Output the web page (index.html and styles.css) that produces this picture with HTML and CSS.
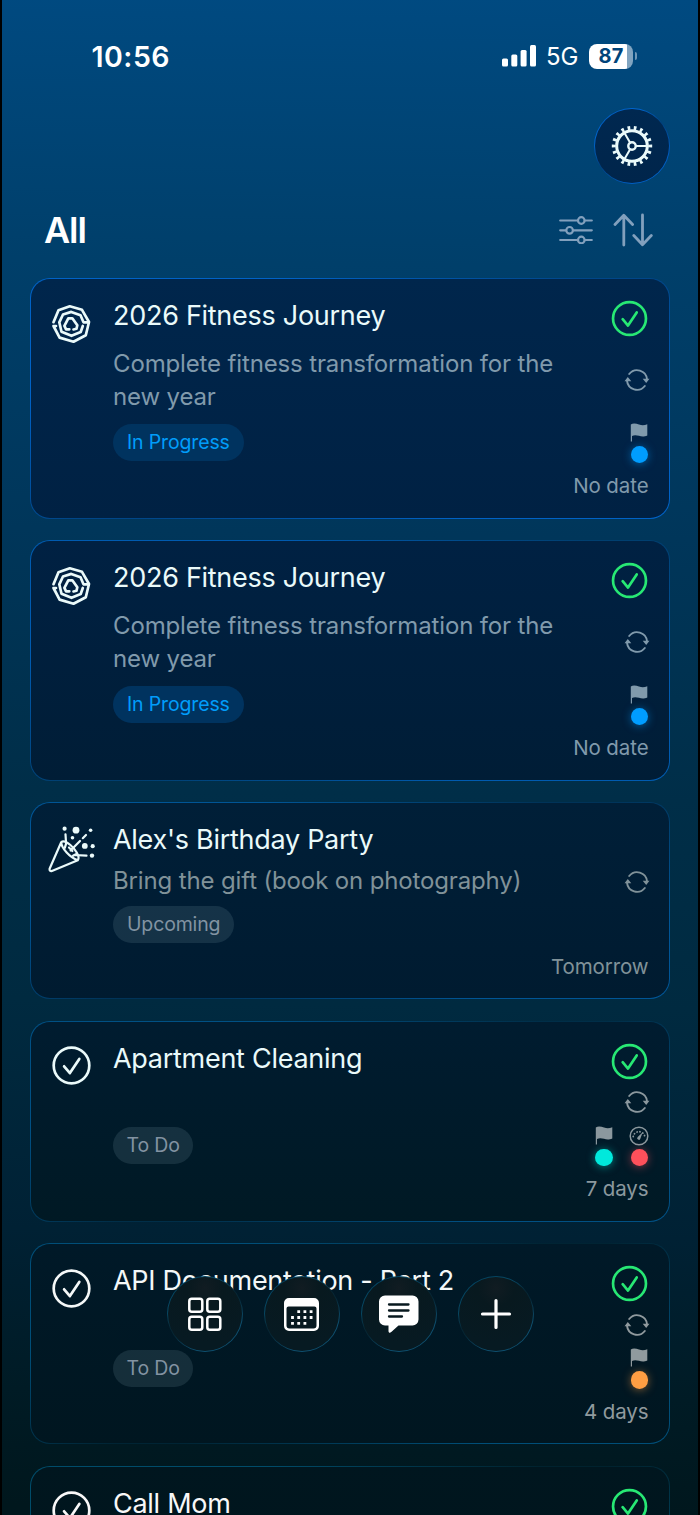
FILE: index.html
```html
<!DOCTYPE html>
<html lang="en">
<head>
<meta charset="utf-8">
<title>All tasks</title>
<link rel="stylesheet" href="styles.css">
</head>
<body>
<svg width="0" height="0" class="defs">
  <defs>
    <symbol id="check" viewBox="0 0 40 40"><circle cx="20" cy="20" r="17.8"/><path d="M12.6 20.8l5.8 6.8L27.8 13.4"/></symbol>
    <symbol id="sync" viewBox="0 0 26 24"><path d="M5.2 6A10 10 0 0 1 23 11.3M20.8 18A10 10 0 0 1 3 12.7"/><path class="solid" d="M18.7 10.800h6.800l-3.300 4.200zM.5 13.200h6.800L3.800 9z"/></symbol>
    <symbol id="flag" viewBox="0 0 18 19"><path d="M.8 1.6C3-.2 6 .4 9 1.6c3 1 5.500.8 8.300-.3V12.400C14 14 11.500 13.600 9 12.800 6.300 12 4 11.900 2 12.900V18.500H.8z"/></symbol>
    <symbol id="gauge" viewBox="0 0 20 20"><circle cx="10" cy="10" r="8.800"/><path class="ticks" d="M4.200 10.500a5.900 5.900 0 0 1 11.600 0"/><path class="solid" d="M13.700 6.200l-2.300 6.400a1.600 1.600 0 1 1-2.700-1.500z"/></symbol>
    <symbol id="spiral" viewBox="0 0 40 40"><path d="M2.500 18.200L7.500 6.300 18.800 2.300 31 5.800 38 18l-3.200 13.200L22.500 37.700 8.600 33.600 2.500 22H5"/><path d="M37 18.300h-4.500L29.500 11.300 20.300 7.900 12 10.500 8.300 18.300 10.500 27.700 20.500 31.800 29.700 28 31.800 22"/><path d="M18.300 25.300h-3.200L13.400 21.800 17.300 14.300h4L26.300 21.300 25.500 24.800 22.500 25.500"/></symbol>
    <symbol id="party" viewBox="0 0 48 48"><path d="M13.200 16.300L1.600 42.800c-.4 1.700.8 2.600 2.300 2.100L29.800 34.200c3-3.600-3.400-11.800-7.400-15.200-3.600-3-7.300-4.700-9.200-2.700zM13.200 16.300c.2 6 8.800 15.400 16.600 17.900"/><path d="M17.500 8.300l.6 9.400-1.300 4.200M22.600 24.500L32 15M34.800 12.200L38 9M26 29l12.500.7M21 21.500l3.400 3.500M25 29.800l3.500-1.900"/><g class="solid"><circle cx="16.600" cy="2.700" r="2.100"/><circle cx="28" cy="4.200" r="3.400"/><circle cx="42.600" cy="4.200" r="1.800"/><circle cx="24.500" cy="11.700" r="1.800"/><circle cx="36.800" cy="19.900" r="2.900"/><circle cx="44.700" cy="20.200" r="2.100"/><circle cx="44" cy="29.600" r="2.200"/></g></symbol>
  </defs>
</svg>
<div class="phone">
  <header class="status">
    <span class="time">10:56</span>
    <div class="signals">
      <svg class="bars" viewBox="0 0 34 22"><rect x="0" y="13.500" width="6" height="8" rx="1.500"/><rect x="9.300" y="9.500" width="6" height="12" rx="1.500"/><rect x="18.600" y="5" width="6" height="16.500" rx="1.500"/><rect x="28" y="0" width="6" height="21.500" rx="1.500"/></svg>
      <span class="network">5G</span>
      <span class="battery">87</span><i class="battery-tip"></i>
    </div>
  </header>
  <div class="settings-row">
    <div class="round">
      <svg class="gear" viewBox="0 0 42 42"><circle cx="21" cy="21" r="15.300" stroke-width="3"/><circle class="teeth" cx="21" cy="21" r="18.200" stroke-width="4" pathLength="36"/><circle cx="21" cy="21" r="3.700" stroke-width="2.400"/><path stroke-width="2" d="M25 21h10M19 17.600L13.500 8M19 24.400L13.500 34"/></svg>
    </div>
  </div>
  <div class="heading">
    <h1>All</h1>
    <svg class="filter" viewBox="0 0 34 28"><path d="M1.200 4.500h17.500M25.800 4.500h7M1.200 14.300H7M14.200 14.300h18.600M1.200 24h17.500M25.800 24h7"/><circle cx="22.300" cy="4.500" r="3.300"/><circle cx="10.600" cy="14.300" r="3.300"/><circle cx="22.300" cy="24" r="3.300"/></svg>
    <svg class="sort" viewBox="0 0 40 34"><path d="M10.800 32V2.500M2 11.500L10.800 2.300l8.800 9.200M29.500 2v29.500M20.800 22.500l8.700 9.200 8.800-9.200"/></svg>
  </div>
  <main class="list">
    <article class="card tall c1">
      <svg class="icon"><use href="#spiral"/></svg>
      <div class="body"><h2>2026 Fitness Journey</h2><p>Complete fitness transformation for the<br>new year</p><span class="badge blue">In Progress</span></div>
      <div class="side"><svg class="done"><use href="#check"/></svg><svg class="sync"><use href="#sync"/></svg><div class="marks"><div class="mark sky"><svg class="flag"><use href="#flag"/></svg><i></i></div></div><time>No date</time></div>
    </article>
    <article class="card tall c2">
      <svg class="icon"><use href="#spiral"/></svg>
      <div class="body"><h2>2026 Fitness Journey</h2><p>Complete fitness transformation for the<br>new year</p><span class="badge blue">In Progress</span></div>
      <div class="side"><svg class="done"><use href="#check"/></svg><svg class="sync"><use href="#sync"/></svg><div class="marks"><div class="mark sky"><svg class="flag"><use href="#flag"/></svg><i></i></div></div><time>No date</time></div>
    </article>
    <article class="card party c3">
      <svg class="icon"><use href="#party"/></svg>
      <div class="body"><h2>Alex's Birthday Party</h2><p>Bring the gift (book on photography)</p><span class="badge">Upcoming</span></div>
      <div class="side"><svg class="sync"><use href="#sync"/></svg><time>Tomorrow</time></div>
    </article>
    <article class="card short c4">
      <svg class="icon"><use href="#check"/></svg>
      <div class="body"><h2>Apartment Cleaning</h2><span class="badge">To Do</span></div>
      <div class="side"><svg class="done"><use href="#check"/></svg><svg class="sync"><use href="#sync"/></svg><div class="marks"><div class="mark teal"><svg class="flag"><use href="#flag"/></svg><i></i></div><div class="mark red"><svg class="gauge"><use href="#gauge"/></svg><i></i></div></div><time>7 days</time></div>
    </article>
    <article class="card short c5">
      <svg class="icon"><use href="#check"/></svg>
      <div class="body"><h2>API Documentation - Part 2</h2><span class="badge">To Do</span></div>
      <div class="side"><svg class="done"><use href="#check"/></svg><svg class="sync"><use href="#sync"/></svg><div class="marks"><div class="mark orange"><svg class="flag"><use href="#flag"/></svg><i></i></div></div><time>4 days</time></div>
    </article>
    <article class="card short c6">
      <svg class="icon"><use href="#check"/></svg>
      <div class="body"><h2>Call Mom</h2></div>
      <div class="side"><svg class="done"><use href="#check"/></svg></div>
    </article>
  </main>
  <nav class="dock">
    <div class="round"><svg viewBox="0 0 40 40"><g class="grid"><rect x="4.300" y="4.800" width="13" height="13" rx="2.500"/><rect x="22.300" y="4.800" width="13" height="13" rx="2.500"/><rect x="4.300" y="22.800" width="13" height="13" rx="2.500"/><rect x="22.300" y="22.800" width="13" height="13" rx="2.500"/></g></svg></div>
    <div class="round"><svg viewBox="0 0 40 40"><path fill="#fff" fill-rule="evenodd" d="M7 4h25a5 5 0 0 1 5 5v23a5 5 0 0 1-5 5H7a5 5 0 0 1-5-5V9a5 5 0 0 1 5-5zM6.500 12.500a2 2 0 0 0-2 2V31.500a3 3 0 0 0 3 3h24a3 3 0 0 0 3-3V14.500a2 2 0 0 0-2-2z"/><path class="days" d="M15.300 17.700h15.500M9.100 23.500h21.500M9.100 29.300h15.500"/></svg></div>
    <div class="round"><svg viewBox="0 0 40 40"><path fill="#fff" d="M6 1.500h27.500a6 6 0 0 1 6 6v18a6 6 0 0 1-6 6H19.500l-7.500 6.800c-1.300 1-2.500.4-2.500-1.300v-5.500H6a6 6 0 0 1-6-6v-18a6 6 0 0 1 6-6z"/><path class="lines" d="M10 10.500h19.500M10 16.500h19.500M10 22.500h13"/></svg></div>
    <div class="round"><svg viewBox="0 0 40 40"><path class="plus" d="M20 6.500v27M6.500 20h27"/></svg></div>
  </nav>
</div>
</body>
</html>
```
FILE: styles.css
```css
* { box-sizing: border-box; }
html, body { height: 1515px; overflow: hidden; }
body { margin: 0; background: #000; font-family: Inter, "Liberation Sans", sans-serif; color: #fff; }
svg { display: block; fill: none; stroke-linecap: round; stroke-linejoin: round; flex: none; }
.defs { position: absolute; }
h1, h2, p { margin: 0; font-weight: 400; }

.phone {
  position: relative;
  width: 696px;
  height: 1515px;
  margin: 0 auto;
  overflow: hidden;
  background: linear-gradient(181deg, #004a81 0, #003f6a 270px, #00365a 540px, #002e48 800px, #002a40 1010px, #002134 1240px, #001b25 1400px, #00171d 1515px);
}

/* status bar */
.status { display: flex; justify-content: space-between; align-items: center; height: 60px; margin-top: 26px; padding: 0 61px 0 89.500px; }
.time { font-size: 28.500px; font-weight: 600; letter-spacing: .5px; }
.signals { display: flex; align-items: center; }
.bars { width: 34px; height: 22px; fill: #fff; }
.network { margin-left: 10.500px; font-size: 24px; width: 43px; letter-spacing: -.1px; }
.battery { width: 44px; height: 25px; border-radius: 8px; background: linear-gradient(90deg, #fff 38px, #80a4c0 38px); color: #00447a; font-size: 20px; font-weight: 700; line-height: 25px; text-align: center; letter-spacing: .2px; }
.battery-tip { width: 2.5px; height: 8px; margin-left: 1.5px; border-radius: 0 3px 3px 0; background: #6f98b8; }

.round { display: grid; place-items: center; width: 76px; height: 76px; border: 1.5px solid transparent; border-radius: 50%; }
.settings-row { display: flex; justify-content: flex-end; height: 88px; padding: 21.500px 28px 0 0; }
.settings-row .round { flex: none; background: linear-gradient(#002850, #00254b) padding-box, linear-gradient(145deg, #005cc0 10%, #0068d4 25%, #00407f 48%, #005cc0 75%, #0068d4) border-box; }
.gear { width: 42px; height: 42px; stroke: #eafafa; }
.gear .teeth { stroke-dasharray: .85 1.15; stroke-dashoffset: .42; stroke-linecap: butt; }

.heading { display: flex; align-items: center; height: 40px; margin-top: 36px; padding: 0 45px 0 42px; }
h1 { flex: 1; font-size: 36px; font-weight: 600; line-height: 40px; letter-spacing: -1.100px; }
.filter { width: 34px; height: 28px; stroke: #82a0bd; stroke-width: 2.200; }
.sort { width: 40px; height: 34px; margin-left: 20px; stroke: #82a0bd; stroke-width: 2.800; }

/* cards */
.list { display: flex; flex-direction: column; gap: 21.5px; padding: 28px 28px 0; }
.card {
  --edge: #0053a3; --dim: #003a6c; --fill: #002448; --fill2: #002143; --ink: #eafafa; --muted: #809aac;
  display: grid; grid-template-columns: 82px minmax(0, 1fr) 120px; flex: none;
  width: 640px; border: 1px solid transparent; border-radius: 20px; color: var(--ink);
  background: linear-gradient(var(--fill), var(--fill2)) padding-box, linear-gradient(155deg, var(--edge) 0, var(--edge) 22%, var(--dim) 48%, var(--dim) 54%, var(--edge) 82%) border-box;
}
.tall { height: 240.500px; }
.party { height: 197px; }
.short { height: 201px; }
.c1 { --edge: #0062c6; --dim: #004688; --fill: #00264c; --fill2: #002143; }
.c2 { --edge: #005bb0; --dim: #003f70; --fill: #002143; --fill2: #001d36; }
.c3 { --edge: #005596; --dim: #003358; --fill: #001f38; --fill2: #001b30; --muted: #809299; }
.c4 { --edge: #005084; --dim: #002e48; --fill: #001c30; --fill2: #001924; --muted: #8b989e; }
.c5 { --edge: #004e78; --dim: #002434; --fill: #001928; --fill2: #001620; --ink: #f4f8f8; --muted: #909a9e; }
.c6 { --edge: #004c6a; --dim: #00222e; --fill: #00161f; --fill2: #001419; --ink: #f8f8f8; }
.icon { width: 40px; height: 40px; margin: 23.500px 0 0 20px; stroke: var(--ink); stroke-width: 2.700; }
.short .icon { width: 41px; height: 41px; margin-left: 19.500px; padding: .5px; }
.tall .icon { margin-top: 25px; }
.party .icon { width: 48px; height: 48px; margin: 23px 0 0 17px; stroke-width: 2.200; }
.solid { fill: currentColor; stroke: none; }
h2 { margin-top: 20px; font-size: 27px; line-height: 34px; white-space: nowrap; letter-spacing: -.28px; }
p { color: var(--muted); font-size: 24px; line-height: 33px; white-space: nowrap; letter-spacing: -.14px; }
.tall p { margin-top: 13.500px; }
.party p { margin-top: 7px; }
.badge { display: block; width: max-content; height: 37px; padding: 0 14px; border-radius: 19px; background: rgba(128,170,180,.16); color: #8293a2; font-size: 19.500px; line-height: 36.500px; letter-spacing: -.15px; }
.tall .badge { margin-top: 11px; }
.party .badge { margin-top: 9px; }
.short .badge { margin-top: 51.500px; padding: 0 13.500px; }
.blue { background: #00335f; color: #009dfa; }

.side { display: flex; flex-direction: column; align-items: flex-end; padding: 21px 20.500px 19.500px 0; color: var(--muted); }
.done { width: 37px; height: 37px; margin-right: 1px; stroke: #27e874; stroke-width: 2.900; }
.sync { width: 26px; height: 24px; margin-right: -1px; stroke: var(--muted); stroke-width: 1.900; }
.tall .sync { margin-top: 30.500px; }
.party .sync { margin-top: 45.500px; }
.short .sync { margin-top: 10.500px; }
.marks { display: flex; gap: 17px; margin-top: auto; margin-bottom: 11px; }
.mark { display: flex; flex-direction: column; align-items: center; gap: 4px; width: 18.500px; }
.flag { width: 18px; height: 19px; fill: currentColor; }
.gauge { width: 20px; height: 20px; margin-bottom: -1px; stroke: currentColor; stroke-width: 1.500; }
.ticks { stroke-dasharray: .1 2.900; stroke-width: 1.800; }
.mark i { width: 17.500px; height: 17.500px; border-radius: 50%; background: var(--dot); box-shadow: 0 1px 9px color-mix(in srgb, var(--dot) 50%, transparent); }
.sky { --dot: #009dff; }
.teal { --dot: #00e9dc; }
.red { --dot: #ff505b; }
.orange { --dot: #ff9e43; }
time { font-size: 20.500px; line-height: 24px; letter-spacing: -.1px; }
.party time { margin-top: auto; }

.dock { position: absolute; left: 164.500px; top: 1275.500px; display: flex; gap: 21px; }
.dock .round { background: radial-gradient(circle at 50% 15%, #111c22, #08191f 25%, #071a22 75%) padding-box, linear-gradient(150deg, #003f5c, #084a66 30%, #062634 45%, #062634 52%, #0e5070 75%) border-box; }
.dock svg { width: 40px; height: 40px; }
.grid { stroke: #fff; stroke-width: 2.500; }
.days { stroke: #fff; stroke-width: 2.800; stroke-linecap: butt; stroke-dasharray: 2.800 3.400; }
.lines { stroke: #08191f; stroke-width: 2.300; }
.plus { stroke: #fff; stroke-width: 3.200; }
```
